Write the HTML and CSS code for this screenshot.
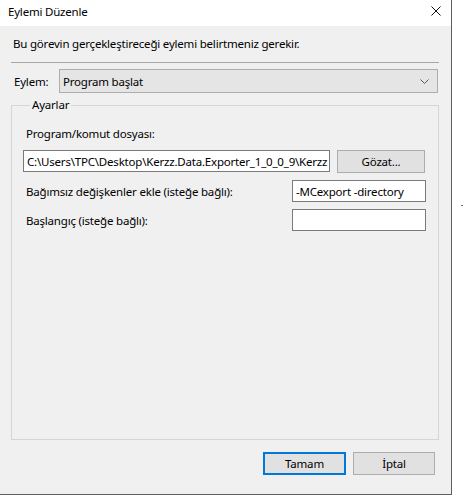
FILE: index.html
```html
<!DOCTYPE html>
<html lang="tr">
<head>
<meta charset="utf-8">
<title>Eylemi Düzenle</title>
<link rel="stylesheet" href="styles.css">
</head>
<body>
<div class="stage">
  <div class="window">
    <div class="titlebar">
      <span class="title">Eylemi Düzenle</span>
      <svg class="close" width="10" height="10" viewBox="0 0 10 10"><path d="M0.5 0.5 L9.5 9.5 M9.5 0.5 L0.5 9.5" stroke="#111" stroke-width="1" fill="none"/></svg>
    </div>
    <div class="content">
      <p class="desc">Bu görevin gerçekleştireceği eylemi belirtmeniz gerekir.</p>
      <div class="sep"></div>
      <div class="action-row">
        <span class="action-label">Eylem:</span>
        <div class="combo">
          <span class="combo-text">Program başlat</span>
          <svg class="chevron" width="9" height="5" viewBox="0 0 9 5"><path d="M0.5 0.5 L4.5 4.5 L8.5 0.5" stroke="#555" stroke-width="1" fill="none"/></svg>
        </div>
      </div>
      <fieldset class="group">
        <legend class="legend">Ayarlar</legend>
        <div class="field-label">Program/komut dosyası:</div>
        <div class="path-row">
          <div class="textbox path-box"><span class="tb-text">C:\Users\TPC\Desktop\Kerzz.Data.Exporter_1_0_0_9\Kerzz</span></div>
          <div class="btn browse">Gözat...</div>
        </div>
        <div class="opt-row">
          <span class="opt-label">Bağımsız değişkenler ekle (isteğe bağlı):</span>
          <div class="textbox small-box"><span class="tb-text">-MCexport -directory</span></div>
        </div>
        <div class="opt-row">
          <span class="opt-label">Başlangıç (isteğe bağlı):</span>
          <div class="textbox small-box"></div>
        </div>
      </fieldset>
      <div class="buttons">
        <div class="btn ok">Tamam</div>
        <div class="btn cancel">İptal</div>
      </div>
    </div>
  </div>
  <div class="outside"><span class="dot"></span></div>
</div>
</body>
</html>
```
FILE: styles.css
```css
html, body {
  margin: 0;
  padding: 0;
  background: #ffffff;
}
body {
  font-family: "Noto Sans", "Liberation Sans", sans-serif;
  font-size: 11.5px;
  letter-spacing: -0.2px;
  color: #000;
}
.stage {
  display: flex;
  width: 464px;
  height: 497px;
}
.window {
  width: 451px;
  height: 494px;
  background: #f0f0f0;
  border-right: 1px solid #5e5e5e;
  border-bottom: 1px solid #5e5e5e;
  display: flex;
  flex-direction: column;
}
.outside {
  flex: 1;
  display: flex;
  flex-direction: column;
  align-items: flex-end;
  padding-top: 205px;
}
.dot {
  width: 2px;
  height: 1px;
  background: #666;
  margin-right: 1px;
}
.titlebar {
  height: 26px;
  background: #fff;
  display: flex;
  align-items: center;
  justify-content: space-between;
  padding: 0 10px 0 8px;
}
.title {
  line-height: 16px;
  margin-top: -2px;
}
.close {
  margin-top: -4px;
}
.content {
  padding: 0 12px 0 11px;
  display: flex;
  flex-direction: column;
}
.desc {
  margin: 9px 0 0 2px;
  line-height: 17px;
}
.sep {
  height: 0;
  border-top: 1px solid #a8a8a8;
  margin-top: 10px;
}
.action-row {
  display: flex;
  align-items: center;
  margin-top: 6px;
  padding-left: 3px;
  padding-right: 1px;
}
.action-label {
  width: 45px;
}
.combo {
  flex: 1;
  height: 22px;
  border: 1px solid #adadad;
  background: #e5e5e5;
  display: flex;
  align-items: center;
  justify-content: space-between;
  padding: 0 8px 0 3px;
}
.chevron {
  margin-top: 1px;
}
.group {
  margin: 5px 0 0 0;
  padding: 14px 12px 0 11px;
  border: 1px solid #d5d5d5;
  height: 326px;
  min-width: 0;
  box-sizing: content-box;
}
.legend {
  padding: 0 2px;
  margin-left: 7px;
  line-height: 14px;
}
.field-label {
  padding-left: 3px;
  line-height: 16px;
}
.path-row {
  display: flex;
  margin-top: 8px;
  gap: 7px;
}
.textbox {
  height: 20px;
  border: 1px solid #7a7a7a;
  background: #fff;
  display: flex;
  align-items: center;
  overflow: hidden;
  white-space: nowrap;
}
.tb-text {
  padding-left: 3px;
}
.path-box {
  width: 305px;
}
.btn {
  box-sizing: border-box;
  height: 23px;
  border: 1px solid #adadad;
  background: #e1e1e1;
  display: flex;
  align-items: center;
  justify-content: center;
}
.browse {
  width: 88px;
}
.opt-row {
  display: flex;
  align-items: center;
  justify-content: space-between;
  margin-top: 7px;
}
.opt-label {
  padding-left: 3px;
}
.small-box {
  width: 132px;
}
.buttons {
  display: flex;
  justify-content: flex-end;
  gap: 7px;
  margin-top: 12px;
  padding-right: 4px;
}
.ok {
  width: 83px;
  border: 2px solid #0078d7;
}
.cancel {
  width: 82px;
}
```
